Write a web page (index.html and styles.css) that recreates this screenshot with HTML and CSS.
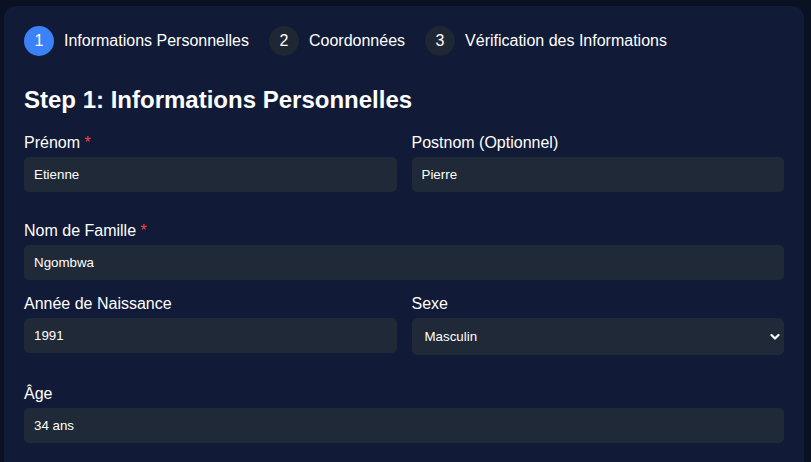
FILE: index.html
```html
<!DOCTYPE html>
<html lang="fr">
<head>
<meta charset="utf-8">
<title>Formulaire</title>
<link rel="stylesheet" href="styles.css">
</head>
<body>
<div class="card">
  <div class="steps">
    <div class="step active"><span class="num">1</span><span class="step-label">Informations Personnelles</span></div>
    <div class="step"><span class="num">2</span><span class="step-label">Coordonnées</span></div>
    <div class="step"><span class="num">3</span><span class="step-label">Vérification des Informations</span></div>
  </div>
  <h2 class="title">Step 1: Informations Personnelles</h2>

  <div class="row">
    <div class="field">
      <label class="label">Prénom <span class="req">*</span></label>
      <input class="input" type="text" value="Etienne">
    </div>
    <div class="field">
      <label class="label">Postnom (Optionnel)</label>
      <input class="input" type="text" value="Pierre">
    </div>
  </div>

  <div class="field">
    <label class="label">Nom de Famille <span class="req">*</span></label>
    <input class="input" type="text" value="Ngombwa">
  </div>

  <div class="row">
    <div class="field">
      <label class="label">Année de Naissance</label>
      <input class="input" type="text" value="1991">
    </div>
    <div class="field">
      <label class="label">Sexe</label>
      <div class="select-wrap">
        <select class="input select">
          <option>Masculin</option>
          <option>Féminin</option>
        </select>
        <svg class="chev" width="10" height="8" viewBox="0 0 10 8"><path d="M1.5 2 L5 5.5 L8.5 2" fill="none" stroke="#fff" stroke-width="2.2" stroke-linecap="round" stroke-linejoin="round"/></svg>
      </div>
    </div>
  </div>

  <div class="field last">
    <label class="label">Âge</label>
    <input class="input" type="text" value="34 ans">
  </div>
</div>
</body>
</html>
```
FILE: styles.css
```css
* { box-sizing: border-box; }
html, body { margin: 0; padding: 0; }
body {
  background: #0a1122;
  font-family: "Liberation Sans", Arial, sans-serif;
  color: #ffffff;
  padding: 6px 7px 0 4px;
  height: 462px;
  overflow: hidden;
}
.card {
  background: #111a36;
  border-radius: 12px 12px 0 0;
  padding: 20px 20px 19px;
  width: 800px;
}
.steps {
  display: flex;
  align-items: center;
  gap: 20px;
  margin-bottom: 30px;
}
.step {
  display: flex;
  align-items: center;
  gap: 10px;
  font-size: 16px;
}
.num {
  width: 30px;
  height: 30px;
  border-radius: 50%;
  background: #1f2732;
  display: flex;
  align-items: center;
  justify-content: center;
  font-size: 16px;
}
.step.active .num { background: #3b82f6; }
.title {
  font-size: 24px;
  font-weight: bold;
  margin: 0 0 21px;
  line-height: 27px;
}
.row {
  display: grid;
  grid-template-columns: 1fr 1fr;
  gap: 15px;
  margin-bottom: 30px;
}
.row .field { margin-bottom: 0; }
.field { margin-bottom: 15px; }
.field.last { margin-bottom: 0; }
.label {
  display: block;
  font-size: 16px;
  line-height: 18px;
  margin-bottom: 5px;
}
.req { color: #ef4444; }
.input {
  display: block;
  width: 100%;
  height: 35px;
  background: #1f2937;
  border: none;
  border-radius: 5px;
  color: #ffffff;
  font-family: "Liberation Sans", Arial, sans-serif;
  font-size: 13.33px;
  padding: 0 10px;
  outline: none;
}
.select-wrap { position: relative; }
.select {
  -webkit-appearance: none;
  appearance: none;
  height: 37px;
  padding-left: 13px;
}
.chev {
  position: absolute;
  right: 4px;
  top: 15px;
  pointer-events: none;
}
```
